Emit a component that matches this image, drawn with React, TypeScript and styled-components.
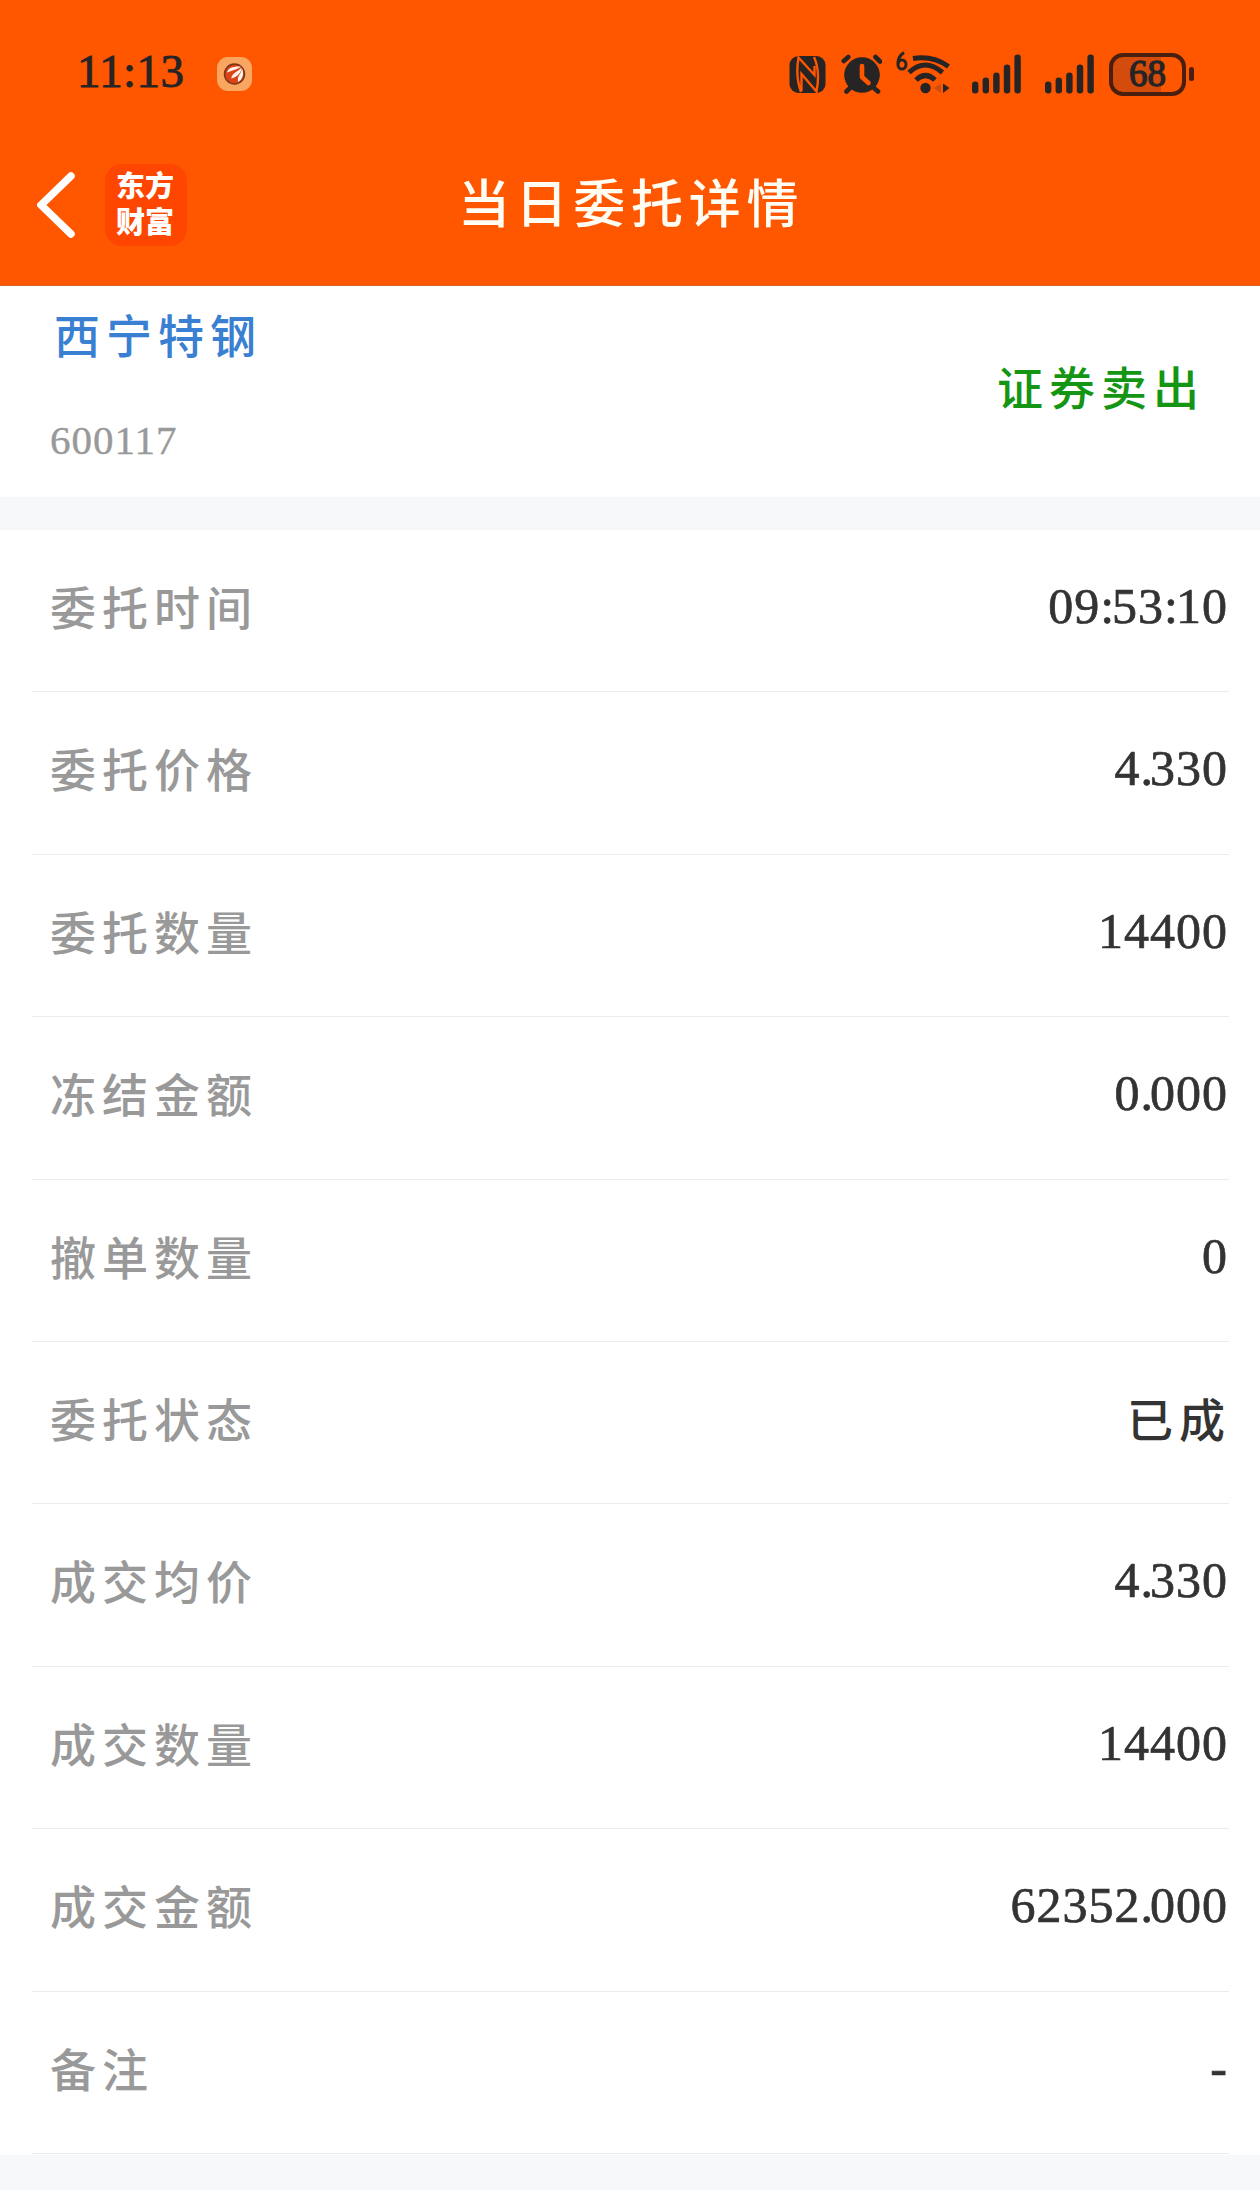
import React from "react";
import styled, { createGlobalStyle } from "styled-components";

const GlobalStyle = createGlobalStyle`
  html, body { margin: 0; padding: 0; background: #f6f8fa; }
  * { box-sizing: border-box; }
`;

const serif = `"Liberation Serif", "Noto Sans CJK SC", serif`;
const kai = `KaiTi, STKaiti, "Noto Sans CJK SC", sans-serif`;
const ink = "#262424";

const Page = styled.main`
  width: 1260px;
  height: 2190px;
  display: flex;
  flex-direction: column;
  background: #f6f8fa;
  overflow: hidden;
`;

const Header = styled.header`
  height: 286px;
  flex: none;
  background: #ff5600;
  border-bottom: 1px solid #d9662c;
`;

const StatusBar = styled.div`
  display: flex;
  align-items: flex-start;
  height: 144px;
  padding: 50px 66px 0 77px;
`;

const Clock = styled.div`
  width: 140px;
  font: 47px/42px ${serif};
  letter-spacing: 0.4px;
  color: ${ink};
  -webkit-text-stroke: 0.9px ${ink};
`;

const StatusIcons = styled.div`
  display: flex;
  margin-left: auto;
`;

const Glyph = styled.svg<{ $gap?: number }>`
  display: block;
  flex: none;
  margin-left: ${(p) => p.$gap ?? 0}px;
`;

const Battery = styled.div`
  display: flex;
  align-items: center;
  height: 44px;
  margin: 2px 0 0 14px;
`;

const BatteryCell = styled.div`
  width: 77px;
  height: 43px;
  border: 4px solid #4a1f10;
  border-radius: 14px;
  background: linear-gradient(90deg, #d44c0c 0 70%, transparent 70%);
  font: 37px/34px ${serif};
  text-align: center;
  color: ${ink};
  -webkit-text-stroke: 1.3px ${ink};
`;

const BatteryNub = styled.div`
  width: 5px;
  height: 14px;
  margin-left: 3px;
  border-radius: 3px;
  background: #4a1f10;
`;

const NavBar = styled.div`
  display: grid;
  grid-template-columns: 68px 82px 1fr 190px;
  padding: 20px 1px 0 37px;
  align-items: center;
`;

const Logo = styled.div`
  display: flex;
  flex-direction: column;
  width: 82px;
  height: 82px;
  padding: 5px 2px 0 0;
  border-radius: 17px;
  background: #ff4600;
  color: #fff;
  font: 900 29px/36px "Liberation Sans", "Noto Sans CJK SC", sans-serif;
  text-align: center;
`;

const Title = styled.h1`
  margin: -8px 0 0;
  padding-left: 6px;
  text-align: center;
  font: 500 52px/76px ${kai};
  letter-spacing: 5.7px;
  color: #fffdf4;
  white-space: nowrap;
`;

const Summary = styled.section`
  flex: none;
  height: 211px;
  display: flex;
  justify-content: space-between;
  padding: 12px 55px 0 50px;
  background: #fff;
`;

const StockName = styled.div`
  padding-left: 4px;
  font: 500 46px/70px ${kai};
  letter-spacing: 6px;
  color: #3a80d2;
`;

const StockCode = styled.div`
  margin-top: 49px;
  font: 41px/46px ${serif};
  letter-spacing: 1px;
  color: #999;
  -webkit-text-stroke: 0.4px #999;
`;

const Direction = styled.div`
  margin-top: 52px;
  height: 70px;
  font: 500 46px/70px ${kai};
  letter-spacing: 6px;
  color: #149614;
`;

const Details = styled.dl`
  flex: none;
  height: 1625px;
  margin: 33px 0 0;
  padding: 0 31px 0 32px;
  background: #fff;
`;

const Row = styled.div`
  display: flex;
  justify-content: space-between;
  height: 162.4px;
  padding: 0 2px 0 18px;
  border-bottom: 1px solid #ebebeb;
`;

const Label = styled.dt`
  font: 500 46px/151px ${kai};
  letter-spacing: 6px;
  color: #999;
`;

const Value = styled.dd<{ $hanzi?: boolean }>`
  margin: 0 ${(p) => (p.$hanzi ? -4 : -1)}px 0 0;
  font: ${(p) => (p.$hanzi ? `500 46px/151px ${kai}` : `50px/153px ${serif}`)};
  letter-spacing: ${(p) => (p.$hanzi ? 6 : 1)}px;
  color: #333;
  -webkit-text-stroke: ${(p) => (p.$hanzi ? 0 : 0.7)}px #333;
`;

const Mark = styled.span<{ $dot: boolean }>`
  letter-spacing: ${(p) => (p.$dot ? -3 : -2)}px;
`;

const rows: [string, string][] = [
  ["委托时间", "09:53:10"],
  ["委托价格", "4.330"],
  ["委托数量", "14400"],
  ["冻结金额", "0.000"],
  ["撤单数量", "0"],
  ["委托状态", "已成"],
  ["成交均价", "4.330"],
  ["成交数量", "14400"],
  ["成交金额", "62352.000"],
  ["备注", "-"],
];

const AppBadge = () => (
  <Glyph width="35" height="44" viewBox="217 50 35 44">
    <rect x="217" y="57" width="35" height="34" rx="11" fill="#f9a661" />
    <circle cx="234.500" cy="74" r="10" fill="#dc4317" stroke="#7c3515" strokeWidth="1.500" />
    <path
      d="M227 72.500C228 68 233 66 241 66.500C238 69.500 233 70 227 72.500ZM231.500 78.500C231 73.500 237 72.500 241.500 67.500C241.500 73 237 77 231.500 78.500ZM238.500 82C236 77.500 241 74.500 242 68.500C244.500 74 242.500 79 238.500 82Z"
      fill="#fff4ea"
    />
  </Glyph>
);

const Nfc = () => (
  <Glyph width="38" height="44" viewBox="788 50 38 44">
    <rect x="789.500" y="56" width="36" height="37" rx="9" fill={ink} />
    <path
      d="M801 92C796.500 80 796.500 69 798.500 57.500L814.500 75V66M801.500 91V74L816.500 91.500C819 79 819 68 814 57"
      fill="none" stroke="#ff5600" strokeWidth="2.400"
    />
  </Glyph>
);

const Alarm = () => (
  <Glyph $gap={14} width="42" height="44" viewBox="840 50 42 44">
    <circle cx="862" cy="75" r="17.800" fill={ink} />
    <path d="M843.800 61l4.500-4M875.500 57l4.500 4.500M850 88l-3.500 3.500M874 88l4 3.500" stroke={ink} strokeWidth="4.600" strokeLinecap="round" />
    <path d="M862 66v11l6.500 6" fill="none" stroke="#ff5600" strokeWidth="4.600" strokeLinecap="round" strokeLinejoin="round" />
  </Glyph>
);

const Wifi = () => (
  <Glyph $gap={13} width="56" height="44" viewBox="895 50 56 44">
    <path d="M904 52.500q-6 4-6 11" fill="none" stroke={ink} strokeWidth="3" />
    <ellipse cx="902" cy="64.500" rx="4" ry="4.600" fill="none" stroke={ink} strokeWidth="3" />
    <g fill="none" stroke={ink} strokeWidth="5">
      <path d="M913 58.500q20-3 35.500 8" />
      <path d="M909 72.500q16-15 33.500 0" />
      <path d="M916 80q9.500-9 19 0" />
    </g>
    <circle cx="925.500" cy="88" r="5.200" fill={ink} />
    <path d="M941 84v9l-7-5z" fill="#c84e16" />
    <path d="M943 83.500v9.500l6.500-5z" fill={ink} />
  </Glyph>
);

const bars = [12, 16, 21, 29, 39];
const Signal = ({ gap }: { gap: number }) => (
  <Glyph $gap={gap} width="51" height="44" viewBox="0 0 51 44">
    {bars.map((h, i) => (
      <rect key={i} x={1 + i * 10.6} y={43.5 - h} width="6.4" height={h} rx="3.2" fill={ink} />
    ))}
  </Glyph>
);

const Figure = ({ text }: { text: string }) => (
  <>
    {text.split(/([.:])/).map((part, i) =>
      i % 2 ? <Mark key={i} $dot={part === "."}>{part}</Mark> : part
    )}
  </>
);

export default function App() {
  return (
    <Page>
      <GlobalStyle />
      <Header>
        <StatusBar>
          <Clock>11:13</Clock>
          <AppBadge />
          <StatusIcons>
            <Nfc />
            <Alarm />
            <Wifi />
            <Signal gap={20} />
            <Signal gap={22} />
            <Battery>
              <BatteryCell>68</BatteryCell>
              <BatteryNub />
            </Battery>
          </StatusIcons>
        </StatusBar>
        <NavBar>
          <Glyph width="40" height="68" viewBox="0 0 40 68">
            <path d="M34 5L4 34L34 63" fill="none" stroke="#fff" strokeWidth="7.500" strokeLinecap="round" />
          </Glyph>
          <Logo><span>东方</span><span>财富</span></Logo>
          <Title>当日委托详情</Title>
        </NavBar>
      </Header>
      <Summary>
        <div>
          <StockName>西宁特钢</StockName>
          <StockCode>600117</StockCode>
        </div>
        <Direction>证券卖出</Direction>
      </Summary>
      <Details>
        {rows.map(([label, value]) => (
          <Row key={label}>
            <Label>{label}</Label>
            <Value $hanzi={value === "已成"}><Figure text={value} /></Value>
          </Row>
        ))}
      </Details>
    </Page>
  );
}
